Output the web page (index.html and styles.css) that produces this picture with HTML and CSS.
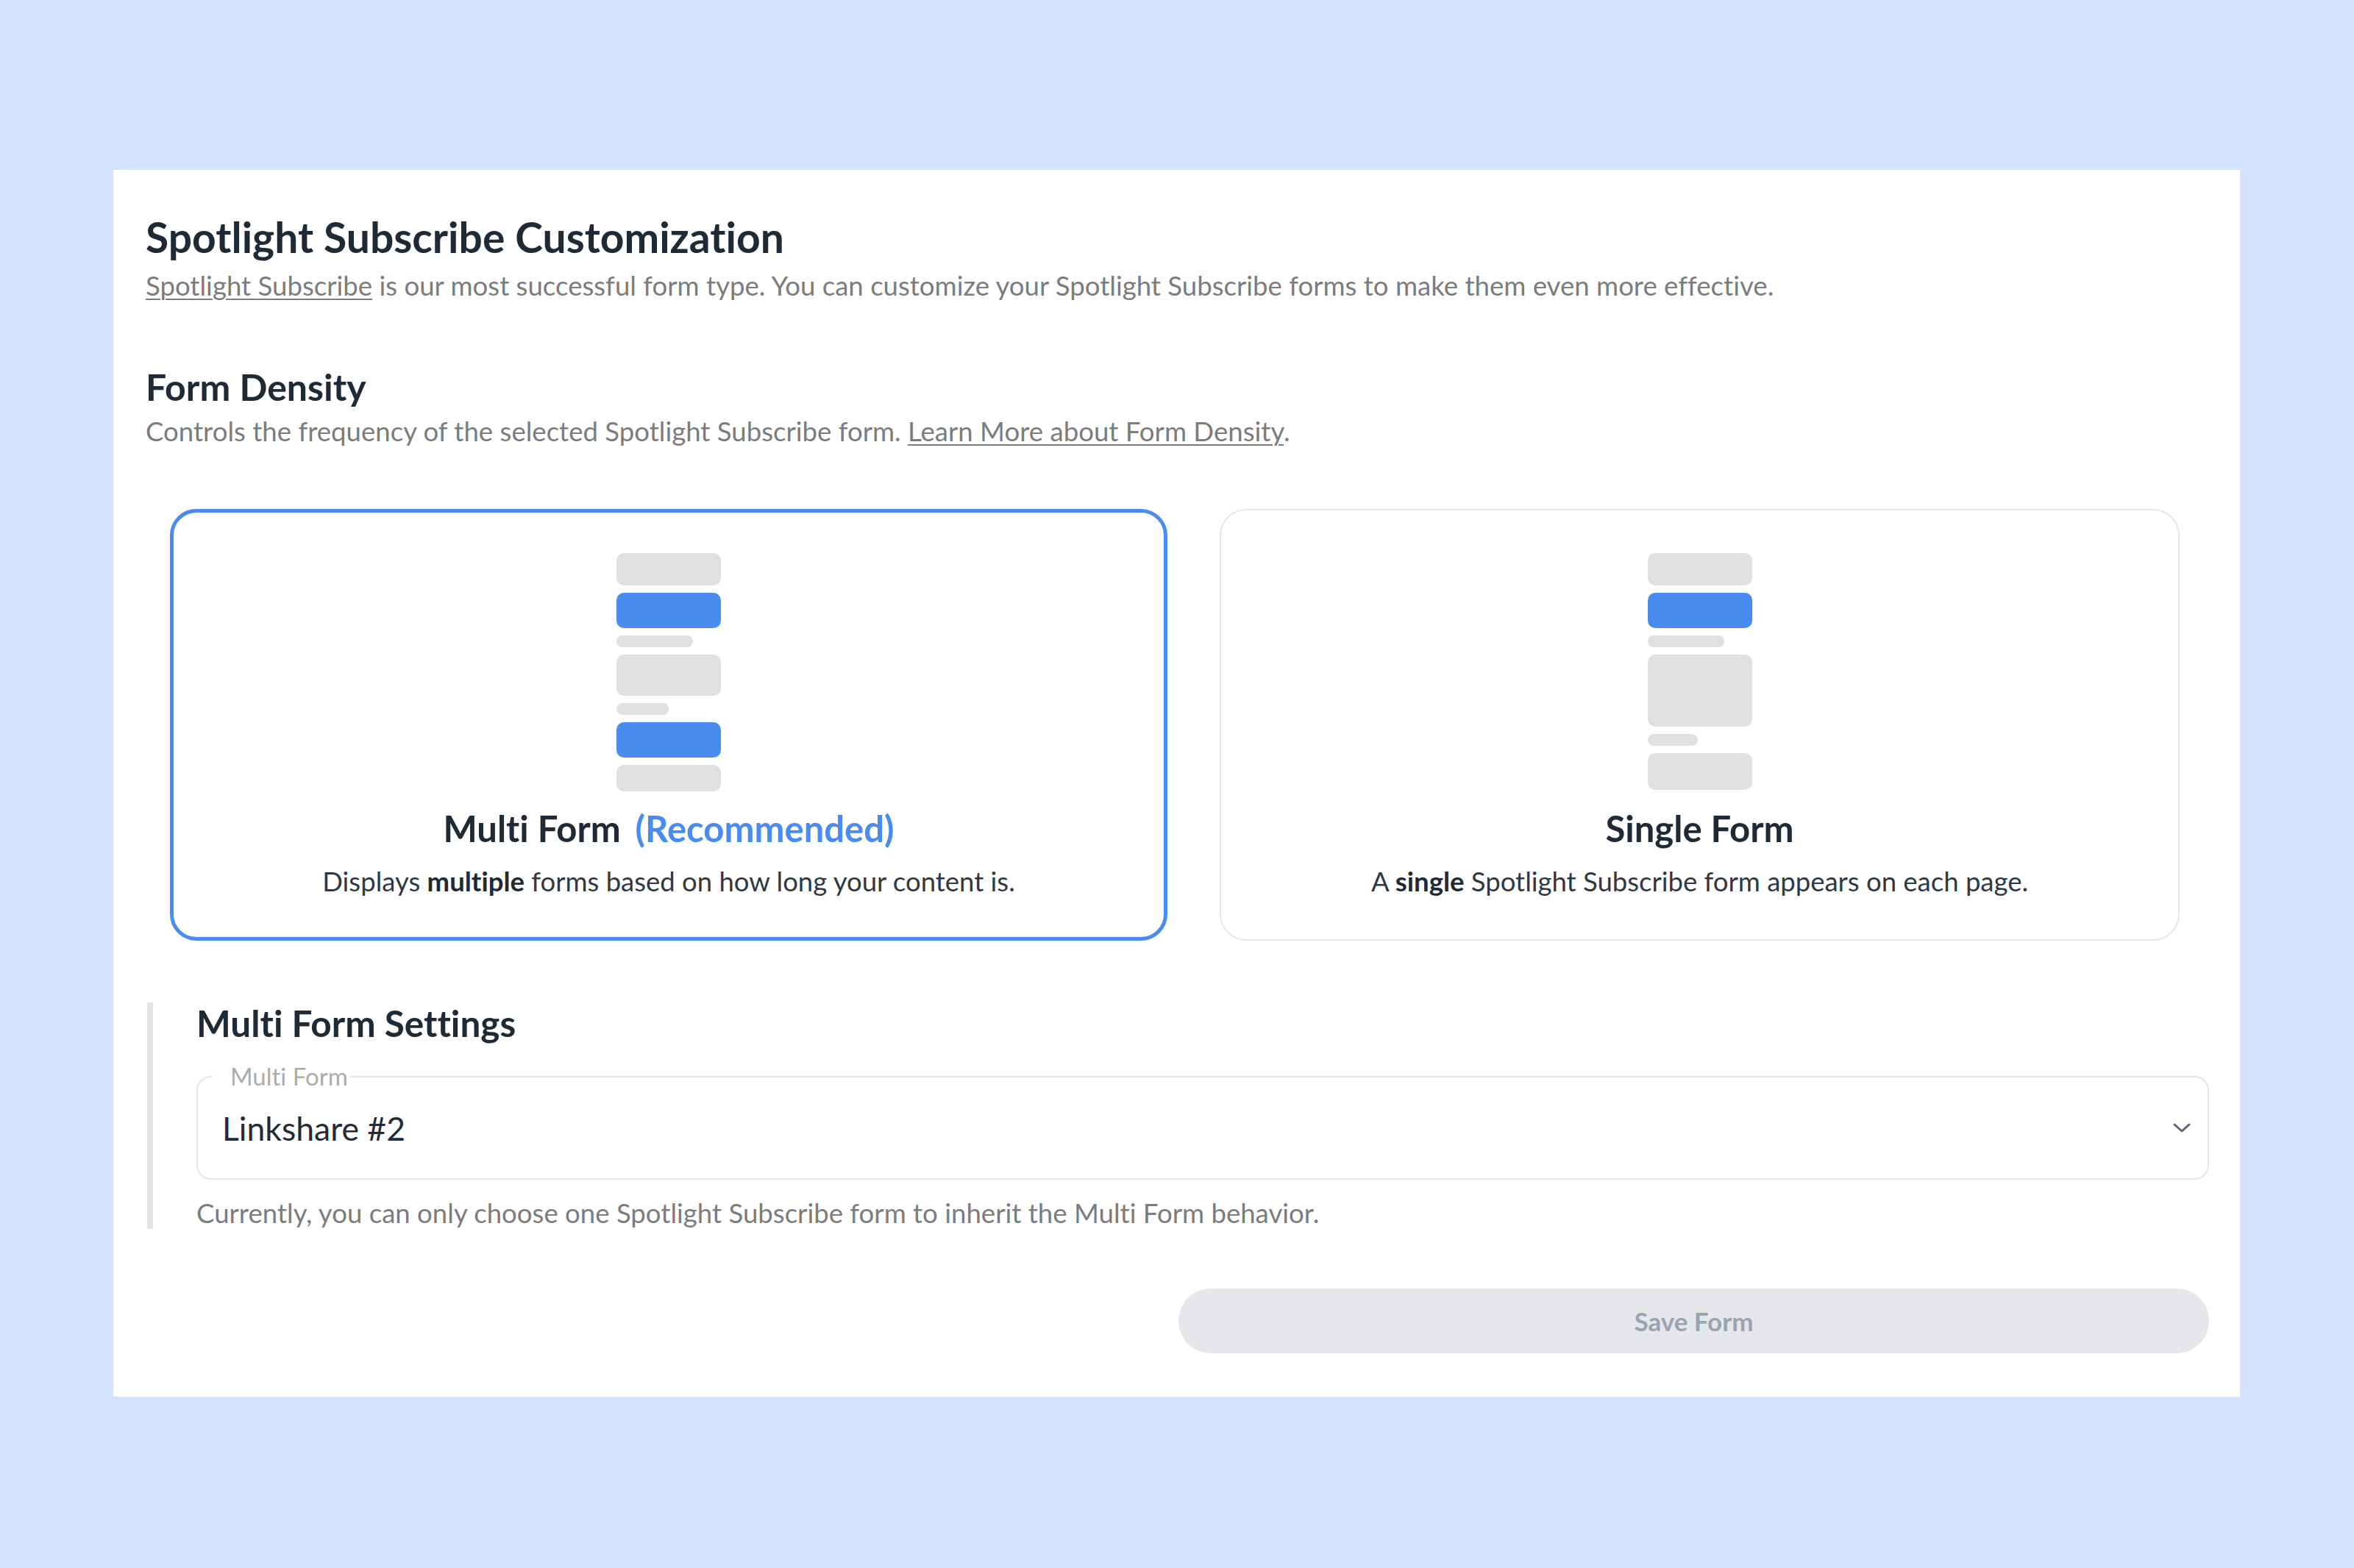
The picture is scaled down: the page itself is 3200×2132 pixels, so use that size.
FILE: index.html
```html
<!DOCTYPE html>
<html lang="en">
<head>
    <meta charset="UTF-8">
    <meta name="viewport" content="width=device-width, initial-scale=1.0">
    <title>Spotlight Subscribe Customization</title>
    <link rel="stylesheet" href="styles.css">
</head>
<body>
    <div class="panel">
        <h1>Spotlight Subscribe Customization</h1>
        <p class="muted sub"><a href="#">Spotlight Subscribe</a> is our most successful form type. You can customize your Spotlight Subscribe forms to make them even more effective.</p>

        <h2>Form Density</h2>
        <p class="muted desc">Controls the frequency of the selected Spotlight Subscribe form. <a href="#">Learn More about Form Density</a>.</p>

        <div class="cards">
            <div class="card selected">
                <div class="sketch">
                    <span class="blk gray" style="height: 44px"></span>
                    <span class="blk blue"></span>
                    <span class="bar" style="width: 104px"></span>
                    <span class="blk gray" style="height: 56px"></span>
                    <span class="bar" style="width: 71px"></span>
                    <span class="blk blue"></span>
                    <span class="blk gray" style="height: 36px"></span>
                </div>
                <div class="card-title">Multi Form <span class="rec">(Recommended)</span></div>
                <div class="card-text">Displays <strong>multiple</strong> forms based on how long your content is.</div>
            </div>
            <div class="card">
                <div class="sketch">
                    <span class="blk gray" style="height: 44px"></span>
                    <span class="blk blue"></span>
                    <span class="bar" style="width: 104px"></span>
                    <span class="blk gray" style="height: 98px"></span>
                    <span class="bar" style="width: 68px"></span>
                    <span class="blk gray" style="height: 50px"></span>
                </div>
                <div class="card-title">Single Form</div>
                <div class="card-text">A <strong>single</strong> Spotlight Subscribe form appears on each page.</div>
            </div>
        </div>

        <div class="settings">
            <h3>Multi Form Settings</h3>
            <div class="select">
                <span class="legend">Multi Form</span>
                <span class="value">Linkshare #2</span>
                <svg class="chev" width="26" height="16" viewBox="0 0 26 16">
                    <polyline points="3,3 13,12 23,3" fill="none" stroke="#5a6773" stroke-width="3" stroke-linecap="round" stroke-linejoin="round"/>
                </svg>
            </div>
            <p class="muted help">Currently, you can only choose one Spotlight Subscribe form to inherit the Multi Form behavior.</p>
        </div>

        <div class="actions">
            <button class="save" disabled>Save Form</button>
        </div>
    </div>
</body>
</html>
```

FILE: styles.css
```css
body {
    margin: 0;
    background-color: #d3e3fb;
    font-family: Lato, "Open Sans", sans-serif;
    font-variant-ligatures: no-common-ligatures;
    color: #1f2a37;
}

.panel {
    margin: 231px 155px 0 154px;
    padding: 58px 42px 59px 44px;
    background-color: #fff;
}

h1 {
    margin: 0;
    font-size: 57px;
    line-height: 66px;
    font-weight: 700;
}

h2 {
    margin: 87px 0 0;
    font-size: 50px;
    line-height: 58px;
    font-weight: 700;
}

.muted {
    color: #7c7c7c;
    font-size: 36.6px;
    line-height: 44px;
    margin: 0;
}

.muted a {
    color: #7c7c7c;
    text-decoration: underline;
    text-underline-offset: 4px;
    text-decoration-thickness: 2px;
}

.sub {
    margin-top: 11px;
}

.desc {
    margin-top: 9px;
}

/* density cards */
.cards {
    display: grid;
    grid-template-columns: 1356px 1305px;
    gap: 71px;
    margin: 84px 0 0 33px;
}

.card {
    height: 587px;
    box-sizing: border-box;
    border: 2px solid #e6e6e6;
    border-radius: 36px;
    padding-top: 58px;
    display: flex;
    flex-direction: column;
    align-items: center;
    text-align: center;
}

.card.selected {
    border: 5px solid #4a8bf0;
    padding-top: 55px;
}

.sketch {
    width: 142px;
    height: 324px;
    display: flex;
    flex-direction: column;
    gap: 10px;
}

.blk {
    display: block;
    border-radius: 10px;
}

.blk.gray {
    background-color: #e0e0e0;
}

.blk.blue {
    height: 48px;
    background-color: #4a8bf0;
}

.bar {
    display: block;
    height: 16px;
    border-radius: 8px;
    background-color: #e0e0e0;
}

.card-title {
    margin-top: 22px;
    font-size: 49px;
    line-height: 56px;
    font-weight: 700;
}

.rec {
    color: #4a8bf0;
    margin-left: 8px;
}

.card-text {
    margin-top: 22px;
    font-size: 36.5px;
    line-height: 44px;
    color: #2f3944;
}

.card-text strong {
    color: #1f2a37;
}

/* multi form settings */
.settings {
    margin: 84px 0 0 2px;
    border-left: 8px solid #e3e3e3;
    padding-left: 59px;
}

h3 {
    margin: 0;
    font-size: 49.5px;
    line-height: 56px;
    font-weight: 700;
}

.select {
    position: relative;
    margin-top: 44px;
    height: 141px;
    box-sizing: border-box;
    border: 2px solid #e3e5ea;
    border-radius: 20px;
    padding: 0 22px 0 33px;
    display: flex;
    align-items: center;
    justify-content: space-between;
}

.legend {
    position: absolute;
    top: -21px;
    left: 20px;
    padding: 0 4px 0 24px;
    background-color: #fff;
    font-size: 33px;
    line-height: 38px;
    color: #acacac;
}

.value {
    font-size: 44.5px;
    color: #222b36;
}

.help {
    margin-top: 23px;
}

.actions {
    display: flex;
    justify-content: flex-end;
    margin-top: 81px;
}

.save {
    width: 1401px;
    height: 88px;
    border: none;
    border-radius: 44px;
    background-color: #e5e7eb;
    color: #9aa3ae;
    font-family: Lato, sans-serif;
    font-size: 35px;
    font-weight: 700;
}
```
